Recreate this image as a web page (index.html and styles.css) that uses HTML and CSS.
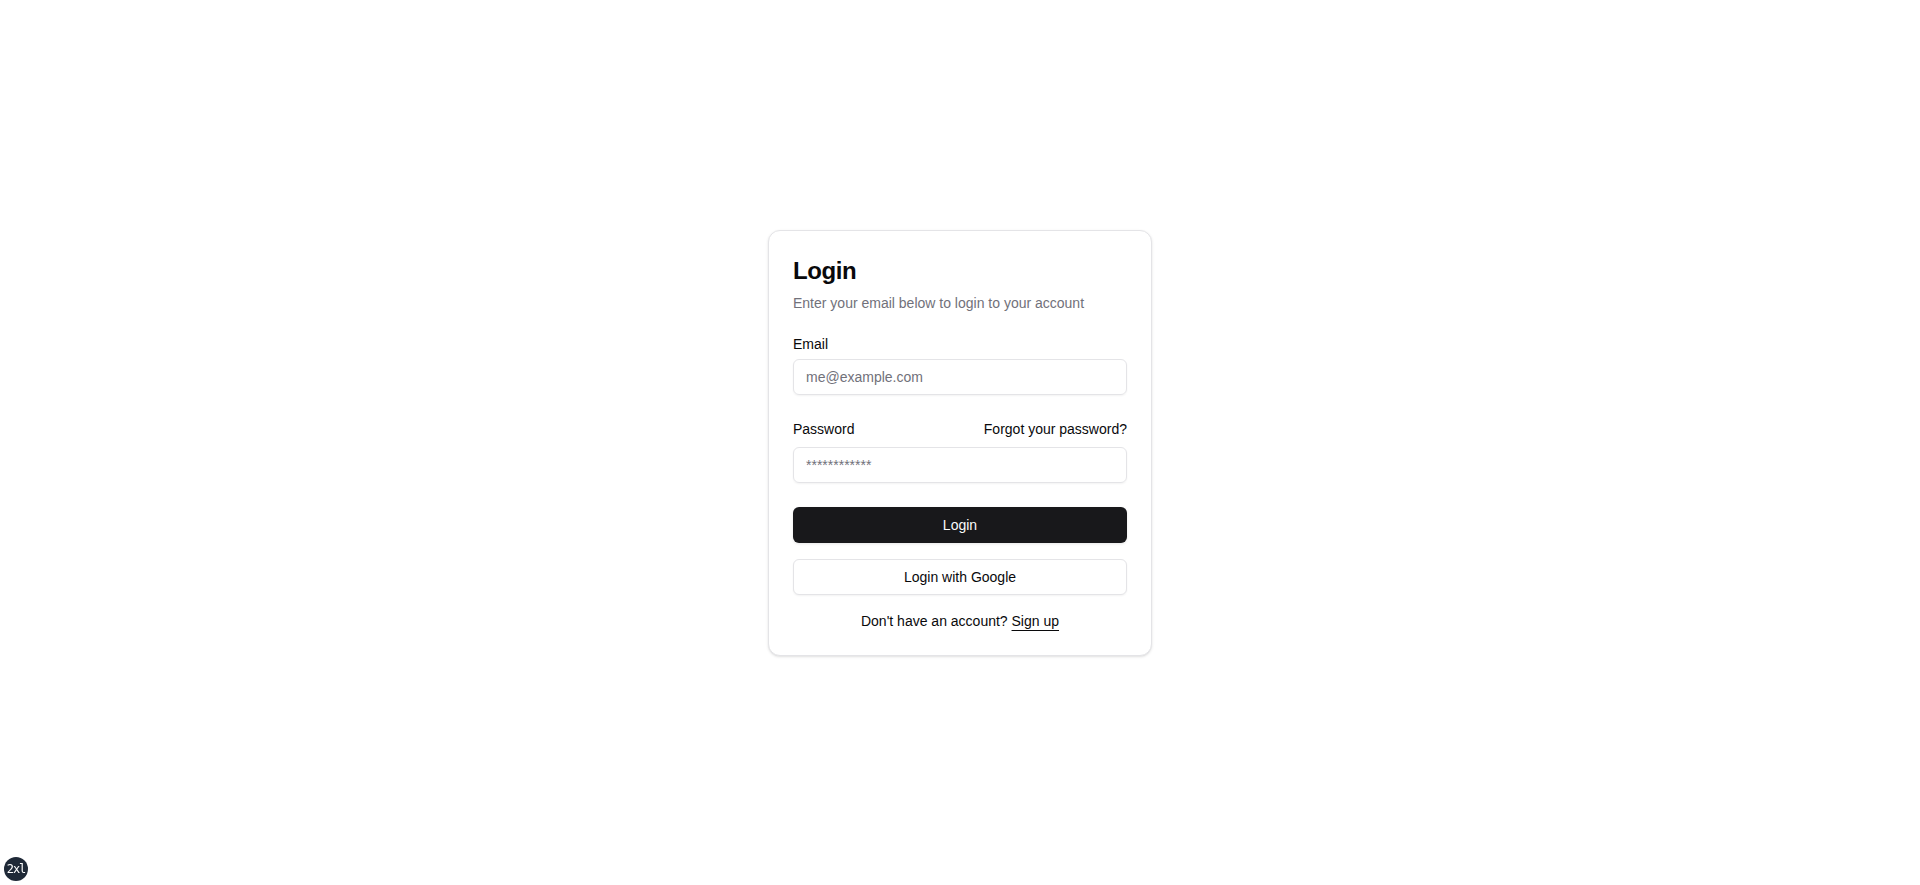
FILE: index.html
```html
<!DOCTYPE html>
<html lang="en">
<head>
<meta charset="utf-8">
<title>Login</title>
<link rel="stylesheet" href="styles.css">
</head>
<body>
<main class="page">
  <div class="card">
    <div class="card-header">
      <h1 class="card-title">Login</h1>
      <p class="card-desc">Enter your email below to login to your account</p>
    </div>
    <div class="card-content">
      <form class="form">
        <div class="field">
          <label class="label" for="email">Email</label>
          <input class="input" id="email" type="email" placeholder="me@example.com">
        </div>
        <div class="field">
          <div class="label-row">
            <label class="label" for="password">Password</label>
            <a class="forgot" href="#">Forgot your password?</a>
          </div>
          <input class="input" id="password" type="password" placeholder="************">
        </div>
        <div class="buttons">
          <button type="button" class="btn btn-primary">Login</button>
          <button type="button" class="btn btn-outline">Login with Google</button>
        </div>
      </form>
      <div class="signup">Don't have an account? <a href="#" class="signup-link">Sign up</a></div>
    </div>
  </div>
</main>
<div class="screen-badge">2xl</div>
</body>
</html>
```
FILE: styles.css
```css
* { box-sizing: border-box; }
html, body { margin: 0; padding: 0; }
body {
  font-family: "Liberation Sans", Arial, sans-serif;
  color: #09090b;
  background: #ffffff;
}
.page {
  min-height: 100vh;
  display: flex;
  align-items: center;
  justify-content: center;
}
.card {
  width: 384px;
  border: 1px solid #e4e4e7;
  border-radius: 12px;
  background: #fff;
  box-shadow: 0 1px 3px 0 rgba(0,0,0,0.1), 0 1px 2px -1px rgba(0,0,0,0.1);
}
.card-header {
  padding: 24px;
  display: flex;
  flex-direction: column;
  gap: 6px;
}
.card-title {
  margin: 0;
  font-size: 24px;
  line-height: 32px;
  font-weight: 700;
  letter-spacing: -0.4px;
  color: #09090b;
}
.card-desc {
  margin: 0;
  font-size: 14px;
  line-height: 20px;
  color: #71717a;
}
.card-content {
  padding: 0 24px 24px;
}
.form {
  display: flex;
  flex-direction: column;
  gap: 24px;
}
.field {
  display: flex;
  flex-direction: column;
  gap: 8px;
}
.label {
  font-size: 14px;
  line-height: 14px;
  color: #09090b;
}
.label-row {
  display: flex;
  align-items: center;
  justify-content: space-between;
  height: 20px;
}
.forgot {
  font-size: 14px;
  line-height: 20px;
  color: #09090b;
  text-decoration: none;
}
.input {
  height: 36px;
  width: 100%;
  border: 1px solid #e4e4e7;
  border-radius: 6px;
  padding: 4px 12px;
  font-family: inherit;
  font-size: 14px;
  color: #09090b;
  background: transparent;
  box-shadow: 0 1px 2px 0 rgba(0,0,0,0.05);
  outline: none;
}
.input::placeholder { color: #71717a; }
.buttons {
  display: flex;
  flex-direction: column;
  gap: 16px;
}
.btn {
  height: 36px;
  width: 100%;
  border-radius: 6px;
  font-family: inherit;
  font-size: 14px;
  cursor: pointer;
}
.btn-primary {
  background: #18181b;
  color: #fafafa;
  border: none;
  box-shadow: 0 1px 3px 0 rgba(0,0,0,0.1);
}
.btn-outline {
  background: #fff;
  color: #09090b;
  border: 1px solid #e4e4e7;
  box-shadow: 0 1px 2px 0 rgba(0,0,0,0.05);
}
.signup {
  margin-top: 16px;
  text-align: center;
  font-size: 14px;
  line-height: 20px;
}
.signup-link {
  color: #09090b;
  text-decoration: underline;
  text-underline-offset: 4px;
}
.screen-badge {
  position: fixed;
  left: 4px;
  bottom: 4px;
  width: 24px;
  height: 24px;
  border-radius: 50%;
  background: #1f2937;
  color: #fff;
  font-family: "DejaVu Sans Mono", monospace;
  font-size: 12px;
  display: flex;
  align-items: center;
  justify-content: center;
  letter-spacing: -1px;
}
```
